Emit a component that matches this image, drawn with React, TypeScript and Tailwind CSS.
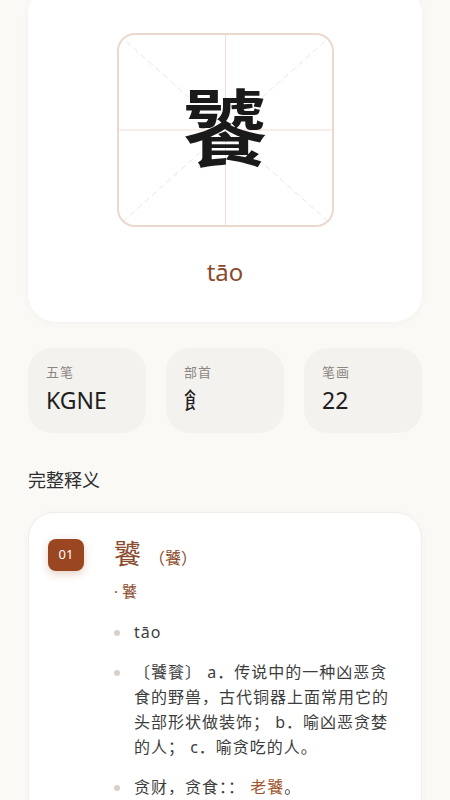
import React from 'react'

const font = { fontFamily: '"Noto Sans", "Noto Sans CJK SC", sans-serif' }

function CharGrid() {
  return (
    <div className="relative w-[217px] h-[194px] mx-auto rounded-[18px] border-2 border-[#ecd8ce] overflow-hidden bg-white">
      <svg className="absolute inset-0 w-full h-full" viewBox="0 0 217 194" preserveAspectRatio="none">
        <line x1="0" y1="0" x2="217" y2="194" stroke="#eee3de" strokeWidth="1" strokeDasharray="6 4" />
        <line x1="217" y1="0" x2="0" y2="194" stroke="#eee3de" strokeWidth="1" strokeDasharray="6 4" />
        <line x1="108.5" y1="0" x2="108.5" y2="194" stroke="#f0ddd4" strokeWidth="1" />
        <line x1="0" y1="97" x2="217" y2="97" stroke="#f0ddd4" strokeWidth="1" />
      </svg>
      <div className="relative flex items-center justify-center h-full">
        <span className="text-[84px] leading-none font-semibold text-[#1a1a1a] -mt-[4px]">饕</span>
      </div>
    </div>
  )
}

function Stat({ label, value }: { label: string; value: string }) {
  return (
    <div className="flex-1 h-[85px] rounded-[24px] bg-[#f4f2ef] pl-[18px] pt-[15px]">
      <div className="text-[13px] leading-[18px] text-[#8c8580] tracking-[1px]">{label}</div>
      <div className="mt-[5px] text-[23px] leading-[28px] text-[#1f1f1f]">{value}</div>
    </div>
  )
}

function Item({ children }: { children: React.ReactNode }) {
  return (
    <li className="flex">
      <span className="mt-[10px] w-[6px] h-[6px] rounded-full bg-[#d9d0cb] shrink-0" />
      <span className="ml-[14px] w-[262px] text-[16px] leading-[25px] tracking-[1px] text-[#3d3d3d]">
        {children}
      </span>
    </li>
  )
}

export default function App() {
  return (
    <div className="min-h-[800px] bg-[#faf9f6] px-[28px] overflow-hidden" style={font}>
      {/* 字卡 */}
      <div className="-mt-[14px] rounded-[28px] bg-white pt-[47px] pb-[34px] shadow-[0_1px_6px_rgba(120,100,80,0.05)]">
        <CharGrid />
        <div className="mt-[29px] text-center text-[24px] leading-[32px] text-[#8b4a2b]">tāo</div>
      </div>

      {/* 五笔 部首 笔画 */}
      <div className="mt-[26px] flex gap-[20px]">
        <Stat label="五笔" value="KGNE" />
        <Stat label="部首" value="飠" />
        <Stat label="笔画" value="22" />
      </div>

      <h2 className="mt-[34px] text-[18px] leading-[26px] text-[#2e2e2e]">完整释义</h2>

      {/* 释义 */}
      <div className="mt-[19px] rounded-[26px] bg-white border border-[#f1eeea] pl-[19px] pt-[24px] pb-[30px] flex shadow-[0_1px_6px_rgba(120,100,80,0.04)]">
        <div className="mt-[2px] w-[36px] h-[32px] rounded-[8px] bg-[#9a4621] text-white text-[13px] flex items-center justify-center shrink-0 shadow-[0_3px_8px_rgba(154,70,33,0.25)]">
          01
        </div>
        <div className="ml-[30px]">
          <div className="flex items-baseline text-[#8b4a2b]">
            <span className="text-[27px] leading-[34px]">饕</span>
            <span className="ml-[8px] text-[16px]">（饕）</span>
          </div>
          <div className="mt-[9px] text-[15px] leading-[22px] text-[#8b4a2b]">· 饕</div>
          <ul className="mt-[18px] flex flex-col gap-[15px]">
            <Item>tāo</Item>
            <Item>〔饕餮〕 a．传说中的一种凶恶贪食的野兽，古代铜器上面常用它的头部形状做装饰； b．喻凶恶贪婪的人； c．喻贪吃的人。</Item>
            <Item>
              贪财，贪食：： <span className="text-[#a0532a]">老饕</span>。
            </Item>
          </ul>
        </div>
      </div>
    </div>
  )
}
